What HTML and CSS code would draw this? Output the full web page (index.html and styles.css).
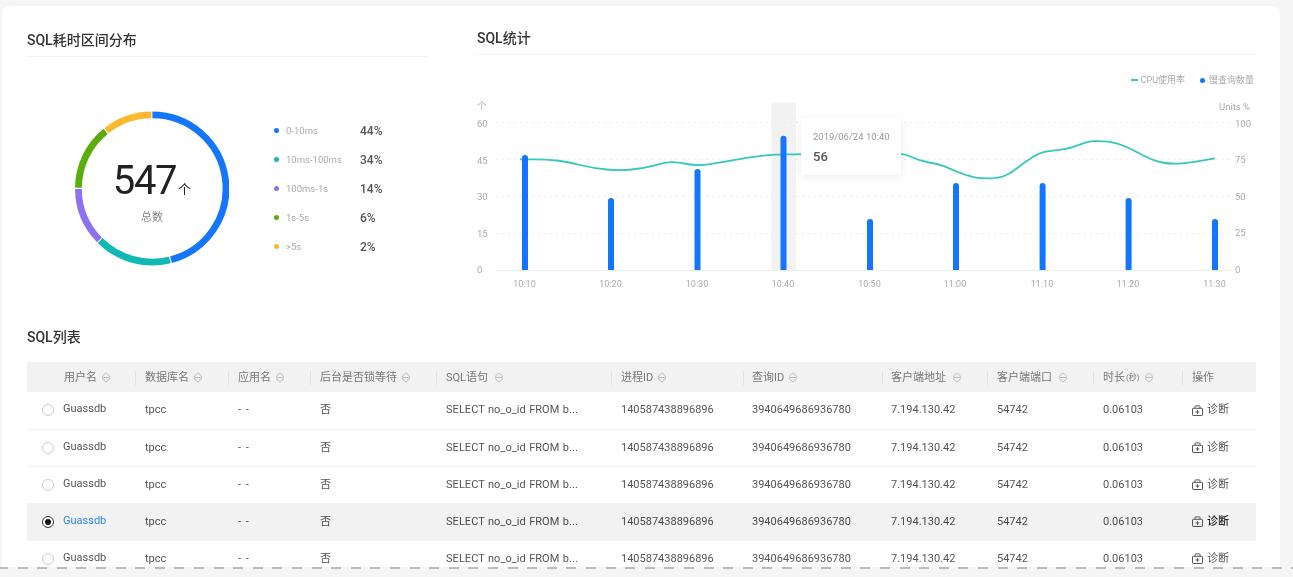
FILE: index.html
```html
<!DOCTYPE html>
<html lang="zh">
<head>
<meta charset="utf-8">
<title>SQL</title>
<link rel="stylesheet" href="styles.css">
</head>
<body>
<svg class="defs" width="0" height="0" aria-hidden="true">
  <symbol id="sort" viewBox="0 0 8 11">
    <path d="M4 1 6.800 3.200A3.500 3.500 0 0 1 6.800 7.800L4 10 1.200 7.800A3.500 3.500 0 0 1 1.200 3.200Z" fill="none" stroke="#bdbdbd" stroke-width="1"/>
    <path d="M1 5.500H7" stroke="#bdbdbd" stroke-width="1"/>
  </symbol>
  <symbol id="diag" viewBox="0 0 11 11">
    <path d="M1.2 3.3h8.6a.7.7 0 0 1 .7.7v5.8a.7.7 0 0 1-.7.7H1.2a.7.7 0 0 1-.7-.7V4a.7.7 0 0 1 .7-.7ZM3 3.3V1.6a.7.7 0 0 1 .7-.7h3.6a.7.7 0 0 1 .7.7v1.7M5.5 5.2v3.6M3.7 7h3.6" fill="none" stroke="#555" stroke-width="1"/>
  </symbol>
</svg>
<main class="card">
  <section class="top">
    <div class="panel panel-left">
      <h2 class="title title-left">SQL耗时区间分布</h2>
      <div class="dist">
        <div class="donut">
          <svg class="donut-svg" viewBox="0 0 154 155" width="154" height="155">
            <g fill="none" stroke-width="6.8">
              <path stroke="#1476ff" d="M77.4 3.9A73.6 73.6 0 0 1 96 148.7"/>
              <path stroke="#12b8b4" d="M94.8 149A73.6 73.6 0 0 1 25.2 129.5"/>
              <path stroke="#8c72f0" d="M24.4 128.8A73.6 73.6 0 0 1 3.4 78"/>
              <path stroke="#5aad0a" d="M3.4 76.7A73.6 73.6 0 0 1 30.6 20.4"/>
              <path stroke="#fbb92d" d="M31.6 19.6A73.6 73.6 0 0 1 76.4 3.9"/>
            </g>
          </svg>
          <div class="donut-center">
            <div class="total"><span class="total-num">547</span><span class="total-unit">个</span></div>
            <div class="total-label">总数</div>
          </div>
        </div>
        <ul class="legend">
          <li class="legend-row"><i class="dot dot-blue"></i><span class="legend-name">0-10ms</span><b class="legend-val">44%</b></li>
          <li class="legend-row"><i class="dot dot-teal"></i><span class="legend-name">10ms-100ms</span><b class="legend-val">34%</b></li>
          <li class="legend-row"><i class="dot dot-purple"></i><span class="legend-name">100ms-1s</span><b class="legend-val">14%</b></li>
          <li class="legend-row"><i class="dot dot-green"></i><span class="legend-name">1s-5s</span><b class="legend-val">6%</b></li>
          <li class="legend-row"><i class="dot dot-yellow"></i><span class="legend-name">&gt;5s</span><b class="legend-val">2%</b></li>
        </ul>
      </div>
    </div>
    <div class="panel panel-right">
      <h2 class="title title-right">SQL统计</h2>
      <div class="chart-legend">
        <span class="chart-key"><i class="key-line"></i>CPU使用率</span>
        <span class="chart-key"><i class="key-dot"></i>慢查询数量</span>
      </div>
      <div class="chart">
        <svg class="chart-svg" viewBox="477 90 779 205" width="779" height="205">
          <rect x="771.3" y="102.7" width="24.7" height="167.3" fill="#f2f2f2"/>
          <g stroke="#ececec" stroke-width="1" stroke-dasharray="2 4">
            <path d="M496 122.5H1232"/>
            <path d="M496 159.5H1232"/>
            <path d="M496 196.5H1232"/>
            <path d="M496 233.5H1232"/>
          </g>
          <path d="M496 270.5H1232M749.5 270V273" stroke="#eeeeee" stroke-width="1"/>
          <path d="M520 159.3L533.3 159.3Q546.7 159.3 556.7 160.5Q566.7 161.7 580 165Q593.3 168.3 606.7 169.5Q620 170.7 631.7 169.5Q643.3 168.3 655 165.3Q666.7 162.3 671.7 162.2Q676.7 162 686.7 164Q696.7 166 708.3 164.3Q720 162.7 735 159.8Q750 157 763.3 155.6Q776.7 154.3 788.3 154.3Q800 154.3 825 153.9Q850 153.5 875 152.8Q900.7 152 910.3 156.5Q920 161 929 162.5Q938 164 943 165.8Q948 167.7 957.3 171.8Q966.7 176 974.8 177.3Q983 178.7 991.5 178.3Q1000 178 1005.8 175.3Q1011.7 172.7 1018.3 167.2Q1025 161.7 1032.5 157.2Q1040 152.7 1045.8 151.7Q1051.7 150.7 1060.8 149.7Q1070 148.7 1078.3 145.2Q1086.7 141.7 1093.3 141.2Q1100 140.7 1108.3 141.7Q1116.7 142.7 1124.8 146.3Q1133 150 1143 155.3Q1153 160.7 1162.3 162.5Q1171.7 164.3 1182.3 163.3Q1193 162.3 1215 158.3" fill="none" stroke="#35c8bc" stroke-width="1.8"/>
          <g fill="#1476ff">
            <path d="M522 270V158a3 3 0 0 1 6 0V270Z"/>
            <path d="M608 270V201a3 3 0 0 1 6 0V270Z"/>
            <path d="M694.5 270V172a3 3 0 0 1 6 0V270Z"/>
            <path d="M780.5 270V138.7a3 3 0 0 1 6 0V270Z"/>
            <path d="M867 270V222a3 3 0 0 1 6 0V270Z"/>
            <path d="M953 270V186a3 3 0 0 1 6 0V270Z"/>
            <path d="M1039.6 270V186a3 3 0 0 1 6 0V270Z"/>
            <path d="M1125.6 270V201a3 3 0 0 1 6 0V270Z"/>
            <path d="M1212 270V222a3 3 0 0 1 6 0V270Z"/>
          </g>
          <g class="axis">
            <text x="477" y="109">个</text>
            <text x="477" y="126.500">60</text>
            <text x="477" y="163.500">45</text>
            <text x="477" y="200">30</text>
            <text x="477" y="236.500">15</text>
            <text x="477" y="273">0</text>
            <text x="1219" y="109.500">Units %</text>
            <text x="1235" y="126.500">100</text>
            <text x="1235" y="163">75</text>
            <text x="1235" y="199.500">50</text>
            <text x="1235" y="236">25</text>
            <text x="1235" y="272.500">0</text>
          </g>
          <g class="axis axis-x">
            <text x="524.500" y="287">10:10</text>
            <text x="610.500" y="287">10:20</text>
            <text x="697" y="287">10:30</text>
            <text x="783" y="287">10:40</text>
            <text x="869.500" y="287">10:50</text>
            <text x="955" y="287">11:00</text>
            <text x="1042" y="287">11:10</text>
            <text x="1128" y="287">11:20</text>
            <text x="1214.500" y="287">11:30</text>
          </g>
        </svg>
        <div class="tooltip">
          <div class="tip-date">2019/06/24 10:40</div>
          <div class="tip-val">56</div>
        </div>
      </div>
    </div>
  </section>
  <section class="list">
    <h2 class="title title-list">SQL列表</h2>
    <table class="grid">
      <colgroup>
        <col class="c1"><col class="c2"><col class="c3"><col class="c4"><col class="c5"><col class="c6"><col class="c7"><col class="c8"><col class="c9"><col class="c10"><col class="c11">
      </colgroup>
      <thead>
        <tr>
          <th><div class="th-first">用户名<svg class="sort"><use href="#sort"/></svg></div></th>
          <th><div class="th-in">数据库名<svg class="sort"><use href="#sort"/></svg></div></th>
          <th><div class="th-in">应用名<svg class="sort"><use href="#sort"/></svg></div></th>
          <th><div class="th-in">后台是否锁等待<svg class="sort"><use href="#sort"/></svg></div></th>
          <th><div class="th-in">SQL语句<svg class="sort sort-wide"><use href="#sort"/></svg></div></th>
          <th><div class="th-in">进程ID<svg class="sort"><use href="#sort"/></svg></div></th>
          <th><div class="th-in">查询ID<svg class="sort"><use href="#sort"/></svg></div></th>
          <th><div class="th-in">客户端地址<svg class="sort sort-wide"><use href="#sort"/></svg></div></th>
          <th><div class="th-in">客户端端口<svg class="sort sort-wide"><use href="#sort"/></svg></div></th>
          <th><div class="th-in">时长<small class="paren">(秒)</small><svg class="sort"><use href="#sort"/></svg></div></th>
          <th><div class="th-in">操作</div></th>
        </tr>
      </thead>
      <tbody>
        <tr>
          <td><div class="user"><i class="radio"></i><span class="user-name">Guassdb</span></div></td>
          <td>tpcc</td><td class="nil">- -</td><td>否</td><td class="sql">SELECT no_o_id FROM b...</td><td>140587438896896</td><td>3940649686936780</td><td>7.194.130.42</td><td>54742</td><td>0.06103</td>
          <td><span class="op"><svg class="op-icon"><use href="#diag"/></svg>诊断</span></td>
        </tr>
        <tr>
          <td><div class="user"><i class="radio"></i><span class="user-name">Guassdb</span></div></td>
          <td>tpcc</td><td class="nil">- -</td><td>否</td><td class="sql">SELECT no_o_id FROM b...</td><td>140587438896896</td><td>3940649686936780</td><td>7.194.130.42</td><td>54742</td><td>0.06103</td>
          <td><span class="op"><svg class="op-icon"><use href="#diag"/></svg>诊断</span></td>
        </tr>
        <tr>
          <td><div class="user"><i class="radio"></i><span class="user-name">Guassdb</span></div></td>
          <td>tpcc</td><td class="nil">- -</td><td>否</td><td class="sql">SELECT no_o_id FROM b...</td><td>140587438896896</td><td>3940649686936780</td><td>7.194.130.42</td><td>54742</td><td>0.06103</td>
          <td><span class="op"><svg class="op-icon"><use href="#diag"/></svg>诊断</span></td>
        </tr>
        <tr class="selected">
          <td><div class="user"><i class="radio radio-on"></i><span class="user-name">Guassdb</span></div></td>
          <td>tpcc</td><td class="nil">- -</td><td>否</td><td class="sql">SELECT no_o_id FROM b...</td><td>140587438896896</td><td>3940649686936780</td><td>7.194.130.42</td><td>54742</td><td>0.06103</td>
          <td><span class="op"><svg class="op-icon"><use href="#diag"/></svg>诊断</span></td>
        </tr>
        <tr>
          <td><div class="user"><i class="radio"></i><span class="user-name">Guassdb</span></div></td>
          <td>tpcc</td><td class="nil">- -</td><td>否</td><td class="sql">SELECT no_o_id FROM b...</td><td>140587438896896</td><td>3940649686936780</td><td>7.194.130.42</td><td>54742</td><td>0.06103</td>
          <td><span class="op"><svg class="op-icon"><use href="#diag"/></svg>诊断</span></td>
        </tr>
      </tbody>
    </table>
  </section>
</main>
<div class="cut"></div>
</body>
</html>
```
FILE: styles.css
```css
* { box-sizing: border-box; }
html, body { margin: 0; height: 577px; overflow: hidden; }
body {
  background: #f5f5f5;
  padding: 6px 13px 0 2px;
  font-family: Roboto, "Noto Sans CJK SC", sans-serif;
  font-size: 11px;
  color: #555;
  filter: blur(0.45px);
}
.defs { position: absolute; }

.card {
  height: 561px;
  overflow: hidden;
  background: #fff;
  border-radius: 8px 8px 0 0;
  padding: 0 24px 0 25px;
}
.cut {
  height: 2px;
  margin: 0 -13px 0 -2px;
  background: repeating-linear-gradient(90deg, #bbb 0 10px, transparent 10px 19.6px);
  background-position: -2px 0;
}

.top { display: flex; gap: 49px; height: 320px; }
.panel-left { width: 401px; padding-top: 24px; }
.panel-right { flex: 1; padding-top: 22px; }

.title {
  margin: 0;
  font-size: 14px;
  line-height: 20px;
  font-weight: 500;
  color: #333;
}
.title-left, .title-right {
  padding-bottom: 6px;
  border-bottom: 1px solid #f2f2f2;
}

.dist { display: flex; padding: 54px 0 0 48px; gap: 45px; }
.donut { position: relative; width: 154px; height: 155px; flex: none; }
.donut-svg { display: block; }
.donut-center {
  position: absolute;
  inset: 0;
  text-align: center;
}
.total {
  display: flex;
  justify-content: center;
  align-items: baseline;
  padding: 43px 0 0 0;
  color: #222;
  line-height: 54px;
  height: 97px;
}
.total-num { font-size: 40px; letter-spacing: -1.4px; font-weight: 400; }
.total-unit { font-size: 13px; margin-left: 2px; }
.total-label { font-size: 11px; line-height: 16px; color: #888; margin-top: 2px; }

.legend {
  list-style: none;
  margin: 0;
  padding: 5px 0 0;
  display: flex;
  flex-direction: column;
  height: 155px;
}
.legend-row {
  display: grid;
  grid-template-columns: 5px 74px auto;
  column-gap: 7px;
  align-items: center;
  height: 29px;
}
.dot { width: 5px; height: 5px; border-radius: 50%; }
.dot-blue { background: #1476ff; }
.dot-teal { background: #12b8b4; }
.dot-purple { background: #8c72f0; }
.dot-green { background: #5aad0a; }
.dot-yellow { background: #fbb92d; }
.legend-name { font-size: 9.5px; color: #aaa; }
.legend-val { font-size: 12px; font-weight: 500; color: #555; margin-left: -7px; }

.chart-legend {
  display: flex;
  justify-content: flex-end;
  gap: 15px;
  padding: 17px 2px 0 0;
  height: 35px;
  font-size: 9px;
  line-height: 16px;
  color: #aaa;
}
.chart-key { display: flex; align-items: center; height: 16px; }
.key-line { width: 7px; height: 2px; background: #35c8bc; margin-right: 3px; }
.key-dot { width: 5px; height: 5px; border-radius: 50%; background: #1476ff; margin-right: 4px; }

.chart { position: relative; height: 205px; }
.chart-svg { display: block; }
.axis text { font-family: Roboto, "Noto Sans CJK SC", sans-serif; font-size: 9.5px; fill: #aaa; }
.axis-x text { text-anchor: middle; font-size: 9px; }
.tooltip {
  position: absolute;
  left: 324px;
  top: 28px;
  width: 100px;
  height: 57px;
  padding: 11px 0 0 12px;
  background: #fff;
  border-radius: 2px;
  box-shadow: 0 2px 10px rgba(0, 0, 0, 0.08);
}
.tip-date { font-size: 9.5px; line-height: 16px; color: #999; white-space: nowrap; }
.tip-val { font-size: 13px; font-weight: 500; line-height: 24px; color: #555; }

.list { padding-top: 1px; }
.title-list { margin-bottom: 15px; }

.grid {
  width: 1229px;
  table-layout: fixed;
  border-collapse: collapse;
  line-height: 16px;
}
.c1 { width: 108px; } .c2 { width: 93px; } .c3 { width: 82px; } .c4 { width: 126px; }
.c5 { width: 175px; } .c6 { width: 132px; } .c7 { width: 139px; } .c8 { width: 105px; }
.c9 { width: 106px; } .c10 { width: 89px; } .c11 { width: 74px; }

th {
  height: 30px;
  padding: 1px 0 0;
  background: #f2f2f2;
  text-align: left;
  font-weight: 400;
  color: #777;
}
.th-in {
  display: flex;
  align-items: center;
  height: 14px;
  padding-left: 9px;
  border-left: 1px solid #e2e2e2;
  white-space: nowrap;
}
th:nth-child(7) .th-in, th:nth-child(8) .th-in { padding-left: 8px; }
.th-first { display: flex; align-items: center; padding-left: 37px; }
.sort { width: 8px; height: 11px; margin-left: 5px; flex: none; }
.sort-wide { margin-left: 7px; }
.paren { font-size: 8px; margin-left: 1px; }

td {
  height: 37px;
  padding: 0 0 0 10px;
  border-bottom: 1px solid #f2f2f2;
  white-space: nowrap;
  vertical-align: middle;
}
td:first-child { padding-left: 15px; }
td:nth-child(7), td:nth-child(8) { padding-left: 9px; }
.nil { letter-spacing: 1px; }
.sql { word-spacing: 0.6px; letter-spacing: 0.05px; }
.user { display: flex; align-items: center; gap: 9px; }
.user-name { position: relative; top: -1px; }
.radio {
  width: 12px;
  height: 12px;
  flex: none;
  border: 1px solid #ccc;
  border-radius: 50%;
  background: #fff;
  display: flex;
  align-items: center;
  justify-content: center;
}
.radio-on { border-color: #333; }
.radio-on::after {
  content: "";
  width: 6px;
  height: 6px;
  border-radius: 50%;
  background: #111;
}
.op { display: flex; align-items: center; gap: 4px; }
.op-icon { width: 11px; height: 11px; flex: none; }

.selected td { background: #f2f2f2; color: #4a4a4a; }
.selected .user-name { color: #2f86f6; }
.selected .op { color: #222; font-weight: 500; }
```
